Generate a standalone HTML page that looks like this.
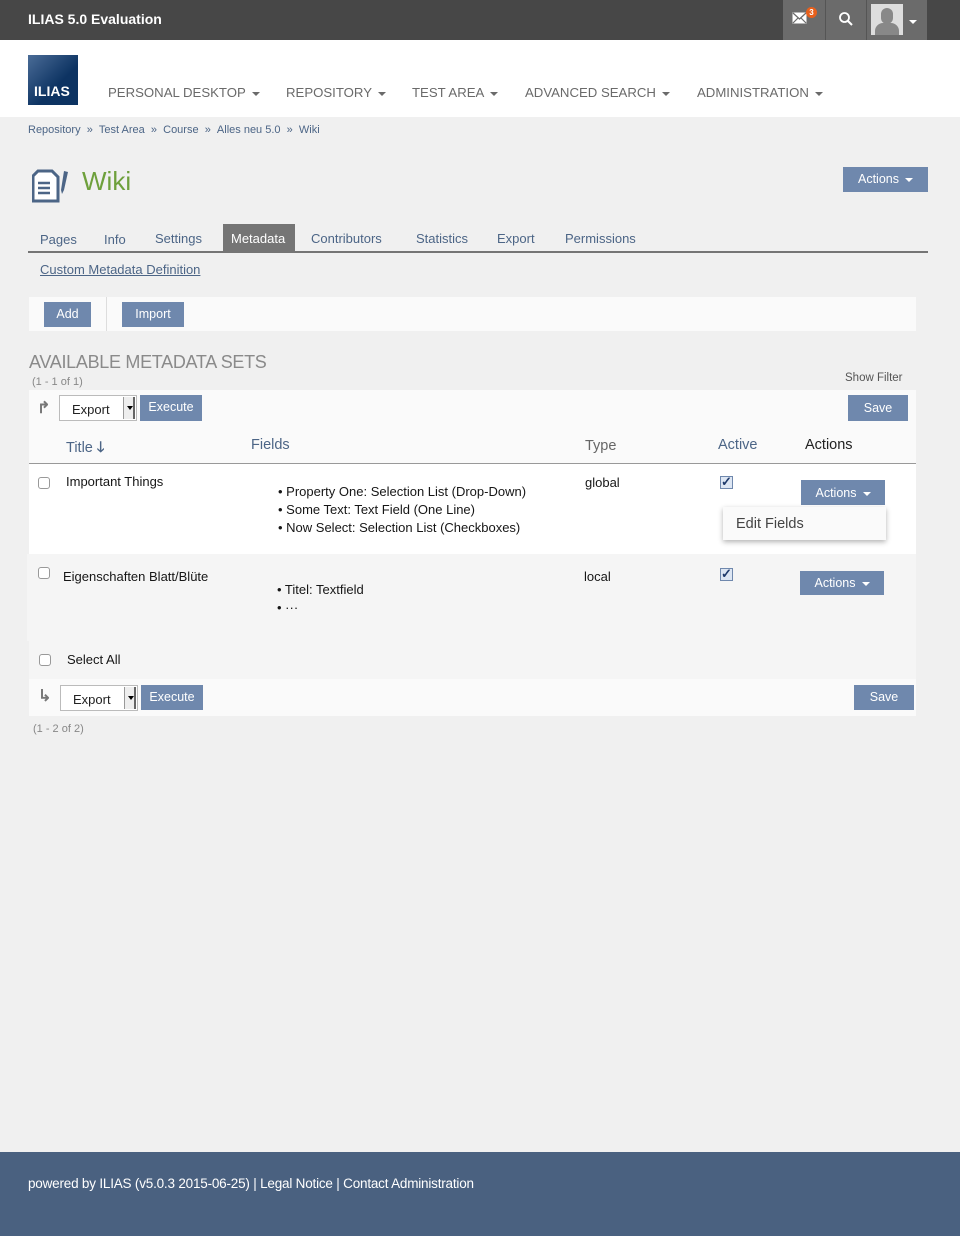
<!DOCTYPE html>
<html><head><meta charset="utf-8"><style>
*{margin:0;padding:0;box-sizing:border-box}
body{width:960px;height:1236px;background:#f0f0f0;font-family:"Liberation Sans",sans-serif;position:relative;overflow:hidden;font-size:13px;color:#161616}
.a{position:absolute;white-space:nowrap}
.btn{position:absolute;background:#6f88ad;color:#fff;font-size:12.5px;text-align:center}
.car{display:inline-block;width:0;height:0;border-left:4px solid transparent;border-right:4px solid transparent;border-top:4px solid currentColor;vertical-align:middle;margin-left:6px}
.nav{position:absolute;top:85px;font-size:13.2px;color:#6a6a6a}
.bc{color:#4c6586;font-size:11.5px}
.tab{position:absolute;top:231px;font-size:13px;color:#4c6586}
.cb{position:absolute;width:12px;height:12px;border:1px solid #999;border-radius:3px;background:#fff}
.sel{position:absolute;background:#fff;border:1px solid #bbb;font-size:13px;color:#222;padding:6px 0 0 12px}
.sel i{position:absolute;right:1px;top:1px;bottom:1px;width:12px;background:#eee;border-left:1px solid #999;border-right:2px solid #666}
.sel i:after{content:"";position:absolute;left:3px;top:9px;border-left:3px solid transparent;border-right:3px solid transparent;border-top:4px solid #000}
.chk{position:absolute;width:13px;height:13px;border:1px solid #6f88ad;background:#dde6f3;font-size:13px;line-height:10px;color:#1f3a6b;font-weight:bold;text-align:center}
</style></head><body>
<div class="a" style="left:0;top:0;width:960px;height:40px;background:#474747"></div>
<div class="a" style="left:28px;top:11px;color:#fff;font-size:14px;font-weight:bold">ILIAS 5.0 Evaluation</div>
<div class="a" style="left:783px;top:0;width:144px;height:40px;background:#6b6b6b"></div>
<div class="a" style="left:825px;top:0;width:1px;height:40px;background:#555"></div>
<div class="a" style="left:866px;top:0;width:1px;height:40px;background:#555"></div>
<svg class="a" style="left:792px;top:12px" width="16" height="13"><rect x="0.5" y="0.5" width="14" height="11" fill="#fff"/><path d="M1 1l6.5 6L14 1M1 11l5-5M14 11l-5-5" stroke="#6b6b6b" stroke-width="1.2" fill="none"/></svg>
<div class="a" style="left:806px;top:7px;width:11px;height:11px;border-radius:6px;background:#e8601c;color:#fff;font-size:8px;font-weight:bold;text-align:center;line-height:11px">3</div>
<svg class="a" style="left:838px;top:11px" width="16" height="16"><circle cx="6.5" cy="6.5" r="4.5" stroke="#fff" stroke-width="1.8" fill="none"/><line x1="10" y1="10" x2="14" y2="14" stroke="#fff" stroke-width="2"/></svg>
<div class="a" style="left:871px;top:4px;width:32px;height:31px;background:#ddd;overflow:hidden"><div style="position:absolute;left:10px;top:4px;width:12px;height:16px;border-radius:6px;background:#888"></div><div style="position:absolute;left:4px;top:19px;width:24px;height:14px;border-radius:8px 8px 0 0;background:#888"></div></div>
<div class="a" style="left:909px;top:13px;color:#fff"><span class="car" style="margin:0"></span></div>
<div class="a" style="left:0;top:40px;width:960px;height:77px;background:#fff"></div>
<div class="a" style="left:28px;top:55px;width:50px;height:50px;background:linear-gradient(135deg,#4a6c97,#0d3362 60%);color:#fff;font-weight:bold;font-size:14px;padding:28px 0 0 6px">ILIAS</div>
<div class="nav" style="left:108px">PERSONAL DESKTOP<span class="car"></span></div>
<div class="nav" style="left:286px">REPOSITORY<span class="car"></span></div>
<div class="nav" style="left:412px">TEST AREA<span class="car"></span></div>
<div class="nav" style="left:525px">ADVANCED SEARCH<span class="car"></span></div>
<div class="nav" style="left:697px">ADMINISTRATION<span class="car"></span></div>
<div class="a bc" style="left:28px;top:124px;font-size:11px">Repository &nbsp;» &nbsp;Test Area &nbsp;» &nbsp;Course &nbsp;» &nbsp;Alles neu 5.0 &nbsp;» &nbsp;Wiki</div>
<svg class="a" style="left:32px;top:168px" width="40" height="36"><path d="M6 3h14l6 6v24H1V8z" fill="#fff" stroke="#4c6586" stroke-width="3"/><path d="M6 15h12M6 20h12M6 25h12" stroke="#4c6586" stroke-width="2.5"/><path d="M32 3l4 1-4 18-2 4-1-4z" fill="#4c6586"/></svg>
<div class="a" style="left:82px;top:166px;font-size:26px;color:#6ea03c">Wiki</div>
<div class="btn" style="left:843px;top:167px;width:85px;height:25px;line-height:25px">Actions<span class="car"></span></div>
<div class="a" style="left:28px;top:251px;width:900px;height:2px;background:#757575"></div>
<div class="a" style="left:223px;top:224px;width:72px;height:27px;background:#757575"></div>
<div class="tab" style="left:40px;top:232px">Pages</div>
<div class="tab" style="left:104px;top:232px">Info</div>
<div class="tab" style="left:155px">Settings</div>
<div class="tab" style="left:231px;color:#fff">Metadata</div>
<div class="tab" style="left:311px">Contributors</div>
<div class="tab" style="left:416px">Statistics</div>
<div class="tab" style="left:497px">Export</div>
<div class="tab" style="left:565px">Permissions</div>
<div class="a" style="left:40px;top:262px;color:#4c6586;text-decoration:underline">Custom Metadata Definition</div>
<div class="a" style="left:29px;top:297px;width:887px;height:34px;background:#fafafa"></div>
<div class="a" style="left:106px;top:297px;width:1px;height:34px;background:#ddd"></div>
<div class="btn" style="left:44px;top:302px;width:47px;height:25px;line-height:25px">Add</div>
<div class="btn" style="left:122px;top:302px;width:62px;height:25px;line-height:25px">Import</div>
<div class="a" style="left:29px;top:352px;font-size:18px;color:#8a8a8a;letter-spacing:-0.3px">AVAILABLE METADATA SETS</div>
<div class="a" style="left:32px;top:376px;font-size:11px;color:#888">(1 - 1 of 1)</div>
<div class="a" style="left:845px;top:372px;font-size:11.5px;color:#555">Show Filter</div>
<div class="a" style="left:29px;top:390px;width:887px;height:36px;background:#fafafa"></div>
<div class="a" style="left:37px;top:398px;font-size:16px;color:#777;font-weight:bold">↱</div>
<div class="sel" style="left:59px;top:395px;width:78px;height:26px">Export<i></i></div>
<div class="btn" style="left:140px;top:395px;width:62px;height:26px;line-height:25px">Execute</div>
<div class="btn" style="left:848px;top:395px;width:60px;height:26px;line-height:26px">Save</div>
<div class="a" style="left:29px;top:426px;width:887px;height:37px;background:#fafafa"></div>
<div class="a" style="left:29px;top:463px;width:887px;height:1px;background:#999"></div>
<div class="a" style="left:66px;top:437px;font-size:14.5px;color:#4c6586">Title <b>🡓</b></div>
<div class="a" style="left:251px;top:437px;font-size:14.5px;color:#4c6586">Fields</div>
<div class="a" style="left:585px;top:438px;font-size:14.5px;color:#666">Type</div>
<div class="a" style="left:718px;top:437px;font-size:14.5px;color:#4c6586">Active</div>
<div class="a" style="left:805px;top:437px;font-size:14.5px;color:#222">Actions</div>
<div class="a" style="left:29px;top:464px;width:887px;height:90px;background:#fff"></div>
<div class="a" style="left:27px;top:554px;width:889px;height:87px;background:#f5f5f5"></div>
<div class="cb" style="left:38px;top:477px"></div>
<div class="a" style="left:66px;top:474px">Important Things</div>
<div class="a" style="left:278px;top:483px;line-height:18px">• Property One: Selection List (Drop-Down)<br>• Some Text: Text Field (One Line)<br>• Now Select: Selection List (Checkboxes)</div>
<div class="a" style="left:585px;top:475px">global</div>
<div class="chk" style="left:720px;top:476px">✓</div>
<div class="btn" style="left:801px;top:480px;width:84px;height:25px;line-height:26px">Actions<span class="car"></span></div>
<div class="a" style="left:723px;top:507px;width:163px;height:33px;background:#fafafa;box-shadow:0 2px 5px rgba(0,0,0,.3);font-size:14.5px;color:#444;padding:9px 0 0 13px">Edit Fields</div>
<div class="cb" style="left:38px;top:567px"></div>
<div class="a" style="left:63px;top:569px">Eigenschaften Blatt/Blüte</div>
<div class="a" style="left:277px;top:581px;line-height:18px">• Titel: Textfield<br>• ···</div>
<div class="a" style="left:584px;top:569px">local</div>
<div class="chk" style="left:720px;top:568px">✓</div>
<div class="btn" style="left:800px;top:571px;width:84px;height:24px;line-height:25px">Actions<span class="car"></span></div>
<div class="a" style="left:29px;top:641px;width:887px;height:38px;background:#f5f5f5"></div>
<div class="cb" style="left:39px;top:654px"></div>
<div class="a" style="left:67px;top:652px">Select All</div>
<div class="a" style="left:29px;top:679px;width:887px;height:37px;background:#fafafa"></div>
<div class="a" style="left:38px;top:686px;font-size:16px;color:#777;font-weight:bold">↳</div>
<div class="sel" style="left:60px;top:685px;width:78px;height:26px">Export<i></i></div>
<div class="btn" style="left:141px;top:685px;width:62px;height:25px;line-height:25px">Execute</div>
<div class="btn" style="left:854px;top:685px;width:60px;height:25px;line-height:25px">Save</div>
<div class="a" style="left:33px;top:723px;font-size:11px;color:#888">(1 - 2 of 2)</div>
<div class="a" style="left:0;top:1152px;width:960px;height:84px;background:#4a6180"></div>
<div class="a" style="left:28px;top:1176px;color:#fff;font-size:13.5px;letter-spacing:-0.2px">powered by ILIAS (v5.0.3 2015-06-25) | Legal Notice | Contact Administration</div>
</body></html>
